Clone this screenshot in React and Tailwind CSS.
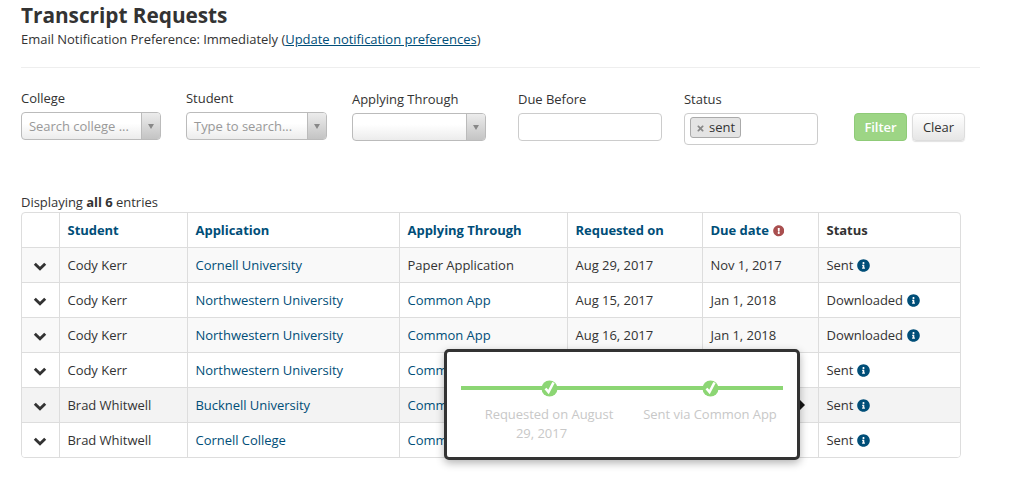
import React from "react";
import { FaInfoCircle, FaExclamationCircle, FaTimes } from "react-icons/fa";

const rows = [
  ["Cody Kerr", "Cornell University", "Paper Application", "Aug 29, 2017", "Nov 1, 2017", "Sent", "bg-[#f9f9f9]"],
  ["Cody Kerr", "Northwestern University", "Common App", "Aug 15, 2017", "Jan 1, 2018", "Downloaded", "bg-white"],
  ["Cody Kerr", "Northwestern University", "Common App", "Aug 16, 2017", "Jan 1, 2018", "Downloaded", "bg-[#f9f9f9]"],
  ["Cody Kerr", "Northwestern University", "Common App", "Aug 29, 2017", "Nov 1, 2017", "Sent", "bg-white"],
  ["Brad Whitwell", "Bucknell University", "Common App", "Aug 29, 2017", "Nov 1, 2017", "Sent", "bg-[#f3f3f3]"],
  ["Brad Whitwell", "Cornell College", "Common App", "Aug 29, 2017", "Nov 1, 2017", "Sent", "bg-white"],
];

function Combo({ label, placeholder, width, arrow }) {
  return (
    <div className={`flex flex-col ${width}`}>
      <label className="h-[19px] leading-[19px] mb-[4px]">{label}</label>
      <div className="flex h-[28px] rounded-[4px] border border-[#bbb] bg-gradient-to-b from-white from-40% to-[#ececec] overflow-hidden">
        <div className="flex-1 pl-[7px] leading-[26px] text-[#999] whitespace-nowrap overflow-hidden">{placeholder}</div>
        <div className={`${arrow} flex items-center justify-center border-l border-[#bbb] bg-gradient-to-b from-[#ececec] to-[#c4c4c4]`}>
          <span className="w-0 h-0 border-l-[3.5px] border-r-[3.5px] border-t-[5px] border-l-transparent border-r-transparent border-t-[#888]" />
        </div>
      </div>
    </div>
  );
}

function Check() {
  return (
    <svg width="18" height="18" viewBox="0 0 18 18" className="block">
      <circle cx="8.5" cy="9.5" r="8" fill="#8cd674" />
      <path d="M4.5 9.5 L7.5 13 L12.5 3.5" fill="none" stroke="#fff" strokeWidth="2.6" />
    </svg>
  );
}

function Chevron() {
  return (
    <svg width="14" height="9" viewBox="0 0 14 9" className="block ml-[3px] mt-[1px]">
      <path d="M1.8 1.7 L7 6.7 L12.2 1.7" fill="none" stroke="#333" strokeWidth="2.9" />
    </svg>
  );
}

export default function App() {
  const th = "border-l border-[#ddd] first:border-l-0 text-left font-bold pl-[8px] pt-[2px] align-middle";
  const td = "border-l border-t border-[#ddd] first:border-l-0 pl-[8px] pt-[2px] align-middle whitespace-nowrap";
  return (
    <div className="relative w-[1012px] h-[488px] overflow-hidden bg-white text-[#333] text-[13px] tracking-[-0.03px] font-['Open_Sans',sans-serif]">
      <div className="pl-[21px] pr-[32px]">
        <h1 className="pt-[2px] pb-[1px] text-[20.8px] leading-[26px] font-bold text-[#333]">Transcript Requests</h1>
        <p className="h-[20px] leading-[20px]">
          Email Notification Preference: Immediately (<a className="text-[#004e78] underline">Update notification preferences</a>)
        </p>
        <hr className="mt-[18px] border-t border-[#eee]" />

        <div className="flex items-start mt-[21px]">
          <Combo label="College" placeholder="Search college ..." width="w-[140px]" arrow="w-[19px]" />
          <div className="ml-[25px]">
            <Combo label="Student" placeholder="Type to search..." width="w-[141px]" arrow="w-[19px]" />
          </div>
          <div className="ml-[25px] mt-[1px]">
            <Combo label="Applying Through" placeholder="" width="w-[134px]" arrow="w-[19px]" />
          </div>
          <div className="ml-[32px] mt-[1px] w-[144px] flex flex-col">
            <label className="h-[19px] leading-[19px] mb-[4px]">Due Before</label>
            <div className="h-[28px] rounded-[4px] border border-[#ccc] bg-white" />
          </div>
          <div className="ml-[22px] mt-[1px] w-[134px] flex flex-col">
            <label className="h-[19px] leading-[19px] mb-[4px]">Status</label>
            <div className="h-[32px] rounded-[4px] border border-[#ccc] bg-white pl-[5px] pt-[3px]">
              <span className="inline-flex items-center h-[21px] pl-[5px] pr-[5px] rounded-[3px] border border-[#aaa] bg-[#e4e4e4] leading-[19px]">
                <FaTimes className="text-[#888] mr-[4px] text-[9px] mt-[1px]" />sent
              </span>
            </div>
          </div>
          <div className="ml-[36px] mt-[24px] flex gap-[5px]">
            <button className="w-[53px] h-[28px] pt-[1px] rounded-[4px] bg-[#9dd585] border border-[#8fcb78] text-white font-semibold">Filter</button>
            <button className="w-[53px] h-[28px] pt-[1px] rounded-[4px] border border-[#ddd] bg-gradient-to-b from-white to-[#e6e6e6] shadow-[0_1px_1px_rgba(0,0,0,0.12)]">Clear</button>
          </div>
        </div>

        <p className="mt-[47px] h-[20px] leading-[20px]">
          Displaying <b>all 6</b> entries
        </p>

        <div className="w-[940px] rounded-[4px] border border-[#ddd] overflow-hidden">
          <table className="w-[938px] table-fixed border-collapse">
            <colgroup>
              <col className="w-[37px]" />
              <col className="w-[128px]" />
              <col className="w-[212px]" />
              <col className="w-[168px]" />
              <col className="w-[135px]" />
              <col className="w-[116px]" />
              <col className="w-[142px]" />
            </colgroup>
            <thead>
              <tr className="h-[34px] text-[#004e78]">
                <th className={th}></th>
                <th className={th}>Student</th>
                <th className={th}>Application</th>
                <th className={th}>Applying Through</th>
                <th className={th}>Requested on</th>
                <th className={th}>
                  <span className="inline-flex items-center gap-[4px]">Due date <FaExclamationCircle className="text-[#a94f4f] text-[11.5px]" /></span>
                </th>
                <th className={`${th} text-[#333]`}>Status</th>
              </tr>
            </thead>
            <tbody>
              {rows.map((r, i) => (
                <tr key={i} className={`h-[35px] ${r[6]}`}>
                  <td className={td}><Chevron /></td>
                  <td className={td}>{r[0]}</td>
                  <td className={`${td} text-[#004e78]`}>{r[1]}</td>
                  <td className={`${td} ${r[2].startsWith("Common") ? "text-[#004e78]" : ""}`}>{r[2]}</td>
                  <td className={td}>{r[3]}</td>
                  <td className={td}>{r[4]}</td>
                  <td className={td}>
                    <span className="inline-flex items-center gap-[4px]">{r[5]} <FaInfoCircle className="text-[#004e78] text-[13px]" /></span>
                  </td>
                </tr>
              ))}
            </tbody>
          </table>
        </div>
      </div>

      <div className="absolute left-[444px] top-[349px] w-[356px] h-[111px] rounded-[5px] border-[3px] border-[#333] bg-white shadow-[0_3px_8px_rgba(0,0,0,0.3)] pl-[14px] pr-[14px] pt-[34px]">
        <div className="relative h-[4px] bg-[#8cd674]">
          <div className="absolute left-[80px] top-[-7px]"><Check /></div>
          <div className="absolute left-[241px] top-[-7px]"><Check /></div>
        </div>
        <div className="flex mt-[15px] text-[#c8c8c8] text-center leading-[19px]">
          <div className="w-[150px] ml-[13px] shrink-0">
            <span className="block">Requested on August</span>
            <span className="block pr-[15px]">29, 2017</span>
          </div>
          <div className="w-[150px] ml-[11px] shrink-0 whitespace-nowrap">Sent via Common App</div>
        </div>
      </div>
      <span className="absolute left-[800px] top-[400px] w-0 h-0 border-y-[5px] border-l-[5px] border-y-transparent border-l-[#111]" />
    </div>
  );
}
